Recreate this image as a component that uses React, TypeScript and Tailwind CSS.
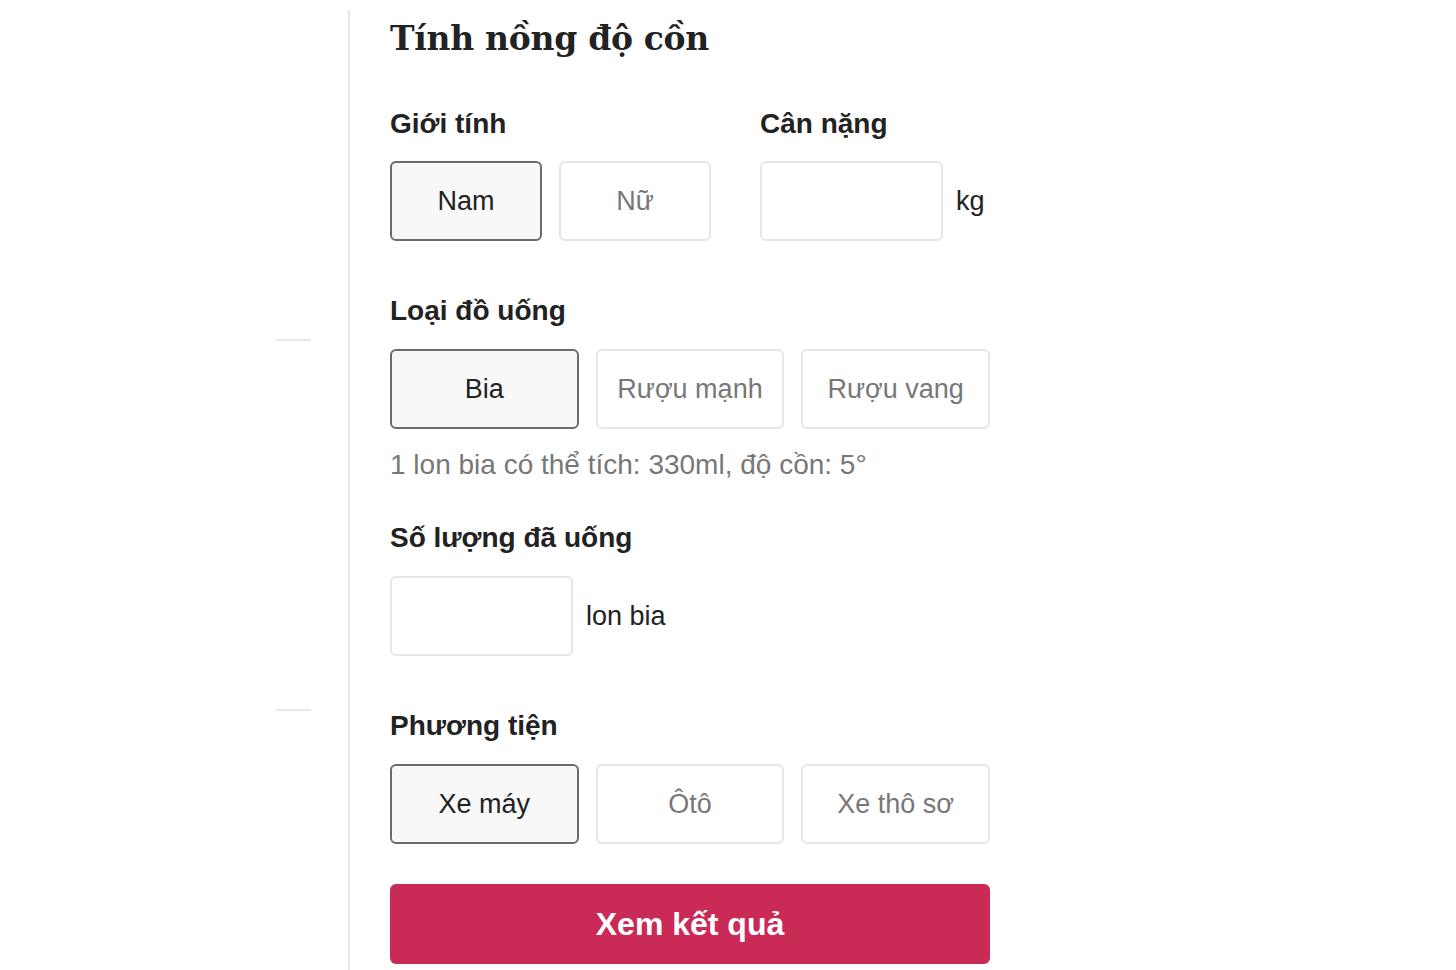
import { useState } from "react";

type Option = { value: string; label: string };

const genders: Option[] = [
  { value: "male", label: "Nam" },
  { value: "female", label: "Nữ" },
];

const drinks: Option[] = [
  { value: "beer", label: "Bia" },
  { value: "liquor", label: "Rượu mạnh" },
  { value: "wine", label: "Rượu vang" },
];

const vehicles: Option[] = [
  { value: "motorbike", label: "Xe máy" },
  { value: "car", label: "Ôtô" },
  { value: "other", label: "Xe thô sơ" },
];

const sans = "font-['Liberation_Sans',Arial,sans-serif]";

export default function App() {
  const [gender, setGender] = useState("male");
  const [drink, setDrink] = useState("beer");
  const [vehicle, setVehicle] = useState("motorbike");
  const [weight, setWeight] = useState("");
  const [amount, setAmount] = useState("");

  return (
    <main className={`flex min-h-screen bg-white text-[#222] ${sans}`}>
      <aside className="w-[348px] shrink-0">
        <div className="ml-[276px] mt-[339px] h-[2px] w-[35px] bg-[#e8e8e8]" />
        <div className="ml-[276px] mt-[368px] h-[2px] w-[35px] bg-[#e8e8e8]" />
      </aside>

      <section className="mt-[10px] w-[642px] border-l-2 border-[#e8e8e8] pl-[40px]">
        <h1 className="mt-[3px] font-['DejaVu_Serif',Georgia,serif] text-[33px] font-bold leading-[52px] tracking-[-0.3px] text-[#222]">
          Tính nồng độ cồn
        </h1>

        <div className="mt-[43px] flex gap-[49px]">
          <div>
            <Label>Giới tính</Label>
            <div className="mt-[21px] flex gap-[17px]">
              {genders.map((o) => (
                <Choice key={o.value} width="w-[152px]" active={gender === o.value} onClick={() => setGender(o.value)}>
                  {o.label}
                </Choice>
              ))}
            </div>
          </div>
          <div>
            <Label>Cân nặng</Label>
            <div className="mt-[21px] flex items-center gap-[13px]">
              <NumberInput value={weight} onChange={setWeight} />
              <span className="text-[27px] text-[#222]">kg</span>
            </div>
          </div>
        </div>

        <div className="mt-[54px]">
          <Label>Loại đồ uống</Label>
          <div className="mt-[22px] flex w-[600px] gap-[17px]">
            {drinks.map((o) => (
              <Choice key={o.value} width="flex-1" active={drink === o.value} onClick={() => setDrink(o.value)}>
                {o.label}
              </Choice>
            ))}
          </div>
          <p className="mt-[20px] text-[28px] leading-[32px] text-[#777]">1 lon bia có thể tích: 330ml, độ cồn: 5°</p>
        </div>

        <div className="mt-[41px]">
          <Label>Số lượng đã uống</Label>
          <div className="mt-[22px] flex items-center gap-[13px]">
            <NumberInput value={amount} onChange={setAmount} />
            <span className="text-[27px] text-[#222]">lon bia</span>
          </div>
        </div>

        <div className="mt-[54px]">
          <Label>Phương tiện</Label>
          <div className="mt-[22px] flex w-[600px] gap-[17px]">
            {vehicles.map((o) => (
              <Choice key={o.value} width="flex-1" active={vehicle === o.value} onClick={() => setVehicle(o.value)}>
                {o.label}
              </Choice>
            ))}
          </div>
        </div>

        <button
          type="button"
          className="mt-[40px] h-[80px] w-[600px] rounded-[6px] bg-[#c92a56] text-[32px] font-bold text-white"
        >
          Xem kết quả
        </button>
      </section>
    </main>
  );
}

function Label({ children }: { children: React.ReactNode }) {
  return <h2 className="text-[28px] font-bold leading-[32px] text-[#222]">{children}</h2>;
}

function Choice({
  children,
  active,
  width,
  onClick,
}: {
  children: React.ReactNode;
  active: boolean;
  width: string;
  onClick: () => void;
}) {
  return (
    <button
      type="button"
      onClick={onClick}
      className={`${width} h-[80px] rounded-[6px] border-2 text-[27px] ${
        active ? "border-[#6b6b6b] bg-[#f8f8f8] text-[#222]" : "border-[#e6e6e6] bg-white text-[#777]"
      }`}
    >
      {children}
    </button>
  );
}

function NumberInput({ value, onChange }: { value: string; onChange: (v: string) => void }) {
  return (
    <input
      inputMode="numeric"
      value={value}
      onChange={(e) => onChange(e.target.value)}
      className="h-[80px] w-[183px] rounded-[6px] border-2 border-[#e6e6e6] bg-white px-3 text-[27px] outline-none"
    />
  );
}
